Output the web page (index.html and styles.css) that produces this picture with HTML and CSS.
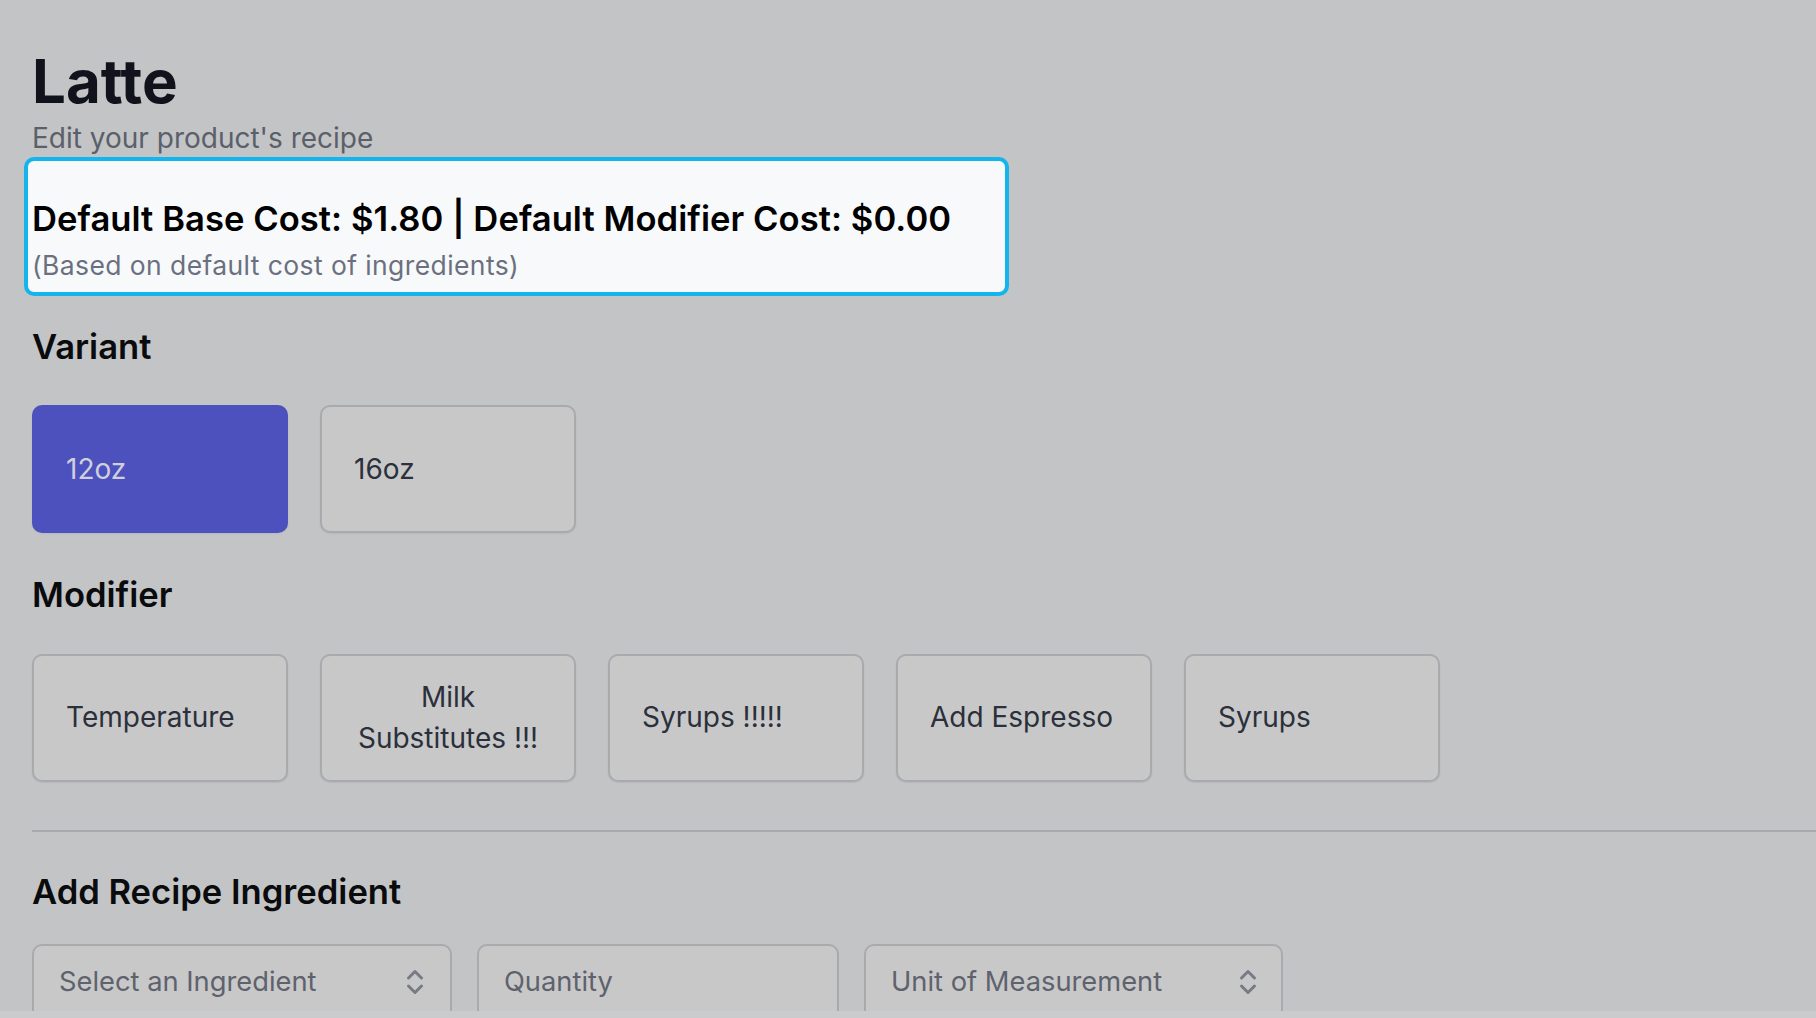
FILE: index.html
```html
<!DOCTYPE html>
<html lang="en">
<head>
<meta charset="utf-8">
<title>Latte – Edit recipe</title>
<link rel="stylesheet" href="styles.css">
</head>
<body>
<main class="page">
  <header class="head">
    <h1 class="title">Latte</h1>
    <p class="subtitle">Edit your product's recipe</p>
  </header>

  <div class="cost">
    <p class="cost-main">Default Base Cost: $1.80 | Default Modifier Cost: $0.00</p>
    <p class="cost-sub">(Based on default cost of ingredients)</p>
  </div>

  <section class="group group-variant">
    <h2 class="group-title">Variant</h2>
    <div class="chips">
      <button class="chip chip-active">12oz</button>
      <button class="chip">16oz</button>
    </div>
  </section>

  <section class="group group-modifier">
    <h2 class="group-title">Modifier</h2>
    <div class="chips">
      <button class="chip">Temperature</button>
      <button class="chip">Milk Substitutes !!!</button>
      <button class="chip">Syrups !!!!!</button>
      <button class="chip">Add Espresso</button>
      <button class="chip">Syrups</button>
    </div>
  </section>

  <hr class="divider">

  <section class="group group-add">
    <h2 class="group-title">Add Recipe Ingredient</h2>
    <div class="fields">
      <div class="field field-select field-ingredient">
        <span class="field-text">Select an Ingredient</span>
        <svg class="updown" viewBox="0 0 18 28" width="18" height="28" aria-hidden="true">
          <polyline points="2.5,10 9,3.5 15.5,10" />
          <polyline points="2.5,18 9,24.5 15.5,18" />
        </svg>
      </div>
      <input class="field field-input" type="text" placeholder="Quantity">
      <div class="field field-select field-unit">
        <span class="field-text">Unit of Measurement</span>
        <svg class="updown" viewBox="0 0 18 28" width="18" height="28" aria-hidden="true">
          <polyline points="2.5,10 9,3.5 15.5,10" />
          <polyline points="2.5,18 9,24.5 15.5,18" />
        </svg>
      </div>
    </div>
  </section>
</main>
<div class="bottom-strip"></div>
</body>
</html>
```

FILE: styles.css
```css
* {
  box-sizing: border-box;
}

html, body {
  margin: 0;
  padding: 0;
}

body {
  background: #c3c4c6;
  font-family: Inter, "Noto Sans", "Liberation Sans", sans-serif;
  color: #0c0d10;
  height: 100vh;
  overflow: hidden;
}

.page {
  padding: 45px 0 0 32px;
  height: 100vh;
  overflow: hidden;
}

.head {
  display: flex;
  flex-direction: column;
}

.title {
  margin: 0;
  font-size: 60px;
  line-height: 72px;
  font-weight: 700;
  color: #10131c;
}

.subtitle {
  margin: 2px 0 0;
  font-size: 28px;
  line-height: 38px;
  color: #5b5f69;
}

.cost {
  width: 985px;
  margin-left: -8px;
  padding: 36px 4px 10px;
  background: #f8f9fb;
  border: 4px solid #14b4ec;
  border-radius: 10px;
}

.cost-main {
  margin: 0;
  font-size: 34.6px;
  line-height: 42px;
  font-weight: 600;
  letter-spacing: 0.05px;
  color: #000;
}

.cost-sub {
  margin: 9px 0 0;
  font-size: 26.5px;
  line-height: 34px;
  letter-spacing: 0.4px;
  color: #6b7080;
}

.group-title {
  margin: 0;
  font-size: 34.6px;
  line-height: 42px;
  font-weight: 600;
  color: #0a0b0d;
}

.group-variant {
  margin-top: 28.5px;
}

.group-modifier {
  margin-top: 40px;
}

.chips {
  display: flex;
  gap: 32px;
  margin-top: 38.5px;
}

.chip {
  width: 256px;
  height: 128px;
  display: flex;
  align-items: center;
  padding: 0 32px;
  text-align: center;
  font-family: inherit;
  font-size: 28px;
  line-height: 40.5px;
  color: #2b303b;
  background: #c8c8c9;
  border: 2px solid #a9aaae;
  border-radius: 10px;
  box-shadow: 0 1px 2px rgba(0, 0, 0, 0.06);
}

.chip-active {
  background: #4c51bd;
  border-color: #4c51bd;
  color: #d0d0dc;
}

.divider {
  margin: 48px 0 0;
  border: 0;
  height: 2px;
  background: #a9aab0;
}

.group-add {
  margin-top: 38.5px;
}

.fields {
  display: flex;
  gap: 25px;
  margin-top: 31.5px;
}

.field {
  height: 76px;
  display: flex;
  align-items: center;
  padding: 0 26px 0 25px;
  font-family: inherit;
  font-size: 27.3px;
  color: #5e626c;
  background: #c8c8c9;
  border: 2px solid #a9aaae;
  border-radius: 10px;
}

.field-ingredient {
  width: 420px;
  justify-content: space-between;
}

.field-input {
  width: 362px;
  outline: none;
}

.field-input::placeholder {
  color: #5e626c;
}

.field-unit {
  width: 419px;
  justify-content: space-between;
  padding-right: 24px;
}

.updown {
  flex: none;
  fill: none;
  stroke: #777b84;
  stroke-width: 3;
  stroke-linecap: round;
  stroke-linejoin: round;
}

.bottom-strip {
  position: fixed;
  left: 0;
  right: 0;
  bottom: 0;
  height: 7px;
  background: #cacbcd;
}
```
